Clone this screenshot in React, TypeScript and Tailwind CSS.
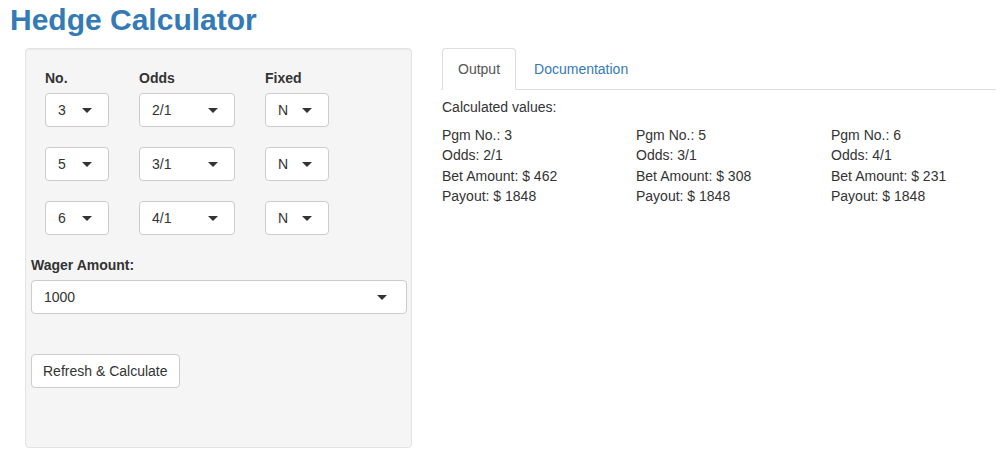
const rows = [
  { no: "3", odds: "2/1", fixed: "N" },
  { no: "5", odds: "3/1", fixed: "N" },
  { no: "6", odds: "4/1", fixed: "N" },
];

const results = [
  { pgm: 3, odds: "2/1", bet: 462, payout: 1848 },
  { pgm: 5, odds: "3/1", bet: 308, payout: 1848 },
  { pgm: 6, odds: "4/1", bet: 231, payout: 1848 },
];

function Select({ value, className = "" }: { value: string; className?: string }) {
  return (
    <div
      className={`relative flex h-[34px] items-center rounded-[4px] border border-[#cccccc] bg-white pl-[12px] ${className}`}
    >
      <span>{value}</span>
      <span className="absolute right-[16px] top-[14px] h-0 w-0 border-x-[5px] border-t-[5px] border-x-transparent border-t-[#333333]" />
    </div>
  );
}

export default function App() {
  return (
    <div className="h-[465px] w-[1005px] overflow-hidden bg-white font-['Liberation_Sans',Arial,sans-serif] text-[14px] leading-[20px] text-[#333333]">
      <h2 className="mt-[3px] px-[10px] text-[30px] font-bold leading-[33px] text-[#337ab7]">Hedge Calculator</h2>

      <div className="mt-[12px] flex">
        {/* sidebar */}
        <div className="ml-[25px] h-[400px] w-[387px] rounded-[4px] border border-[#e3e3e3] bg-[#f5f5f5] pl-[5px] pr-[4px] pt-[19px] shadow-[inset_0_1px_1px_rgba(0,0,0,0.05)]">
          <div className="grid grid-cols-[94px_126px_64px] pl-[14px]">
            <div className="mb-[5px] font-bold">No.</div>
            <div className="mb-[5px] font-bold">Odds</div>
            <div className="mb-[5px] font-bold">Fixed</div>
            {rows.map((r, i) => (
              <div key={i} className="contents">
                <Select value={r.no} className={`w-[64px] ${i > 0 ? "mt-[20px]" : ""}`} />
                <Select value={r.odds} className={`w-[96px] ${i > 0 ? "mt-[20px]" : ""}`} />
                <Select value={r.fixed} className={`w-[64px] ${i > 0 ? "mt-[20px]" : ""}`} />
              </div>
            ))}
          </div>

          <div className="mt-[20px] mb-[5px] font-bold">Wager Amount:</div>
          <Select value="1000" className="w-full [&>span:last-child]:!right-[19px]" />

          <button className="mt-[40px] h-[34px] rounded-[4px] border border-[#cccccc] bg-white px-[11px] text-[14px] text-[#333333]">
            Refresh &amp; Calculate
          </button>
        </div>

        {/* main panel */}
        <div className="ml-[29px] w-[555px]">
          <ul className="flex border-b border-[#dddddd] pl-[1px]">
            <li className="-mb-px mr-[2px] rounded-t-[4px] border border-[#dddddd] border-b-transparent bg-white px-[15px] py-[10px] text-[#555555]">
              Output
            </li>
            <li className="-mb-px mr-[2px] border border-transparent px-[15px] py-[10px] text-[#337ab7]">Documentation</li>
          </ul>

          <div className="mt-[7px] pl-px">Calculated values:</div>
          <div className="mt-[8px] grid grid-cols-[194px_195px_1fr] pl-px">
            {results.map((r) => (
              <div key={r.pgm} className="leading-[20.3px]">
                <div>Pgm No.: {r.pgm}</div>
                <div>Odds: {r.odds}</div>
                <div>Bet Amount: $ {r.bet}</div>
                <div>Payout: $ {r.payout}</div>
              </div>
            ))}
          </div>
        </div>
      </div>
    </div>
  );
}
